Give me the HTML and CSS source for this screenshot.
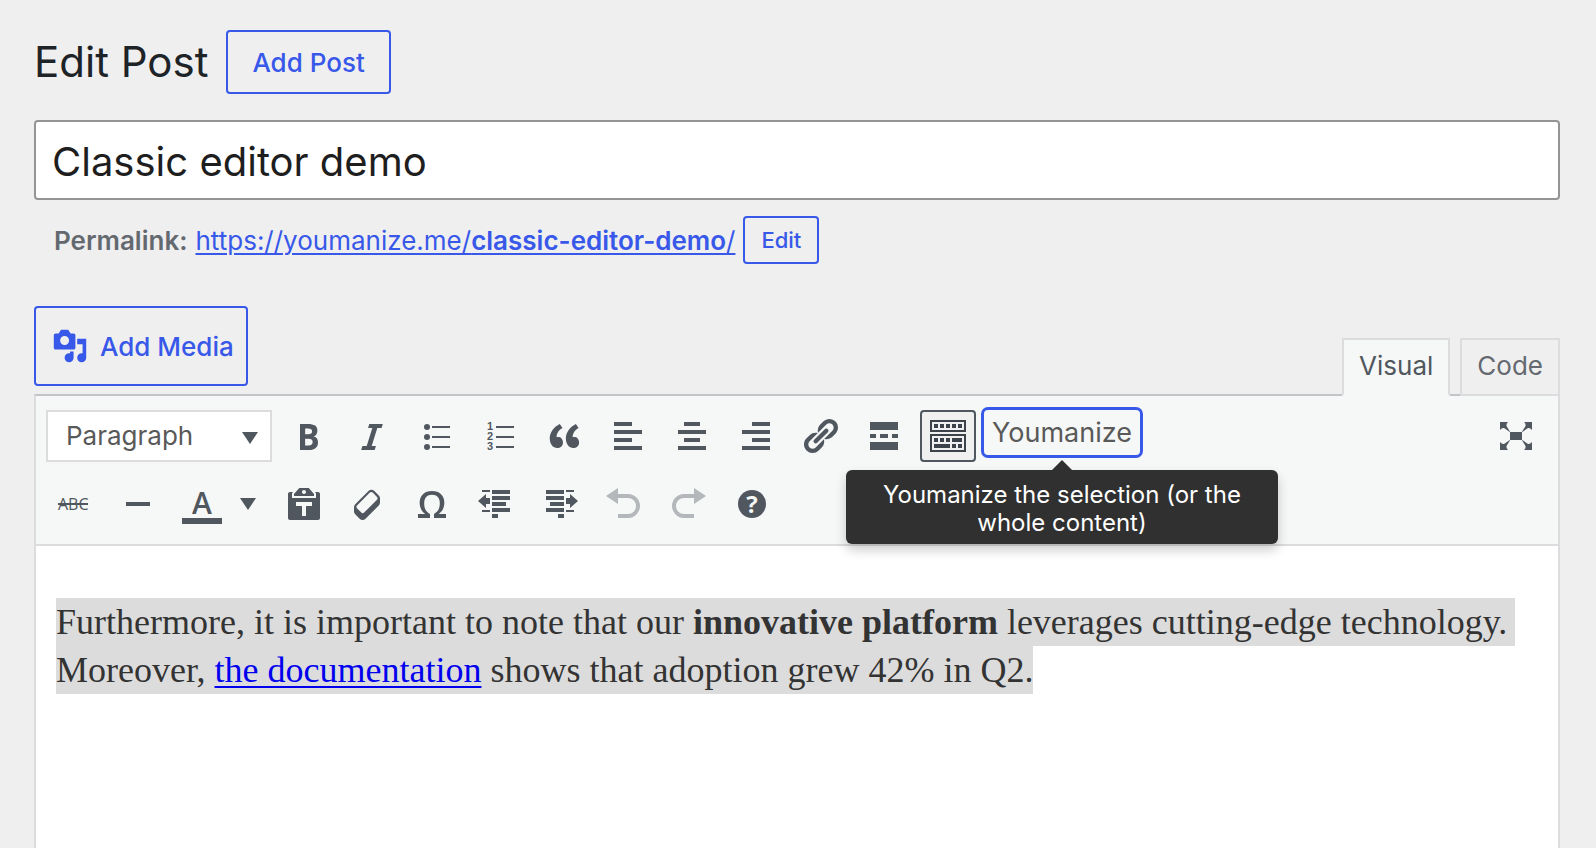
FILE: index.html
```html
<!DOCTYPE html>
<html lang="en">
<head>
<meta charset="utf-8">
<title>Edit Post</title>
<link rel="stylesheet" href="styles.css">
</head>
<body>
<main class="wrap">
  <header class="page-head">
    <h1 class="page-title">Edit Post</h1>
    <button class="btn btn-add" type="button">Add Post</button>
  </header>

  <input class="title-input" type="text" aria-label="Post title" value="Classic editor demo">

  <div class="permalink">
    <strong class="permalink-label">Permalink:</strong>
    <a class="permalink-link" href="#">https://youmanize.me/<b>classic-editor-demo</b>/</a>
    <button class="btn btn-small" type="button">Edit</button>
  </div>

  <div class="editor-tools">
    <button class="btn btn-media" type="button">
      <svg class="media-icon" viewBox="0 0 20 20" aria-hidden="true"><path d="M13 11V4c0-.55-.45-1-1-1h-1.67L9 1H5L3.67 3H2c-.55 0-1 .45-1 1v7c0 .55.45 1 1 1h10c.55 0 1-.45 1-1zM7 4.5c1.38 0 2.5 1.12 2.5 2.5S8.38 9.500 7 9.500 4.500 8.380 4.500 7 5.620 4.500 7 4.500zM14 6h5v10.500c0 1.380-1.120 2.500-2.500 2.500S14 17.880 14 16.500s1.120-2.500 2.500-2.500c.17 0 .34.02.5.05V9h-3V6zm-4 8.050V13h2v3.500c0 1.380-1.120 2.500-2.500 2.500S7 17.880 7 16.500 8.120 14 9.500 14c.17 0 .34.02.5.05z"/></svg>
      Add Media
    </button>
    <div class="tabs">
      <button class="tab tab-active" type="button">Visual</button>
      <button class="tab" type="button">Code</button>
    </div>
  </div>

  <section class="editor">
    <div class="toolbar">
      <div class="tool-row">
        <div class="format">
          <select class="format-select" aria-label="Block format"><option>Paragraph</option></select>
          <svg class="caret format-caret" viewBox="0 0 16 12" aria-hidden="true"><path d="M0 0h16L8 12z"/></svg>
        </div>
        <button class="tool" type="button" aria-label="Bold"><svg class="icon" viewBox="0 0 20 20"><path d="M6 4v13h4.54c1.370 0 2.460-.33 3.260-1 .8-.66 1.200-1.580 1.200-2.770 0-.84-.17-1.510-.51-2.010s-.9-.85-1.670-1.030v-.09c.57-.1 1.020-.4 1.360-.9s.51-1.130.51-1.910c0-1.140-.39-1.980-1.170-2.500C12.750 4.260 11.500 4 9.780 4H6zm2.570 5.150V6.260h1.360c.73 0 1.270.11 1.610.32.34.22.51.58.51 1.070 0 .54-.16.92-.47 1.150s-.82.35-1.510.35h-1.500zm0 2.190h1.600c1.440 0 2.160.53 2.160 1.610 0 .6-.17 1.050-.51 1.340s-.86.43-1.570.43H8.570v-3.380z"/></svg></button>
        <button class="tool" type="button" aria-label="Italic"><svg class="icon" viewBox="0 0 20 20"><path d="M14.780 6h-2.130l-2.800 9h2.120l-.62 2H4.600l.62-2h2.140l2.800-9H8.030l.62-2h6.750z"/></svg></button>
        <button class="tool" type="button" aria-label="Bulleted list"><svg class="icon" viewBox="0 0 40 40"><circle cx="11" cy="11" r="3"/><circle cx="11" cy="21" r="3"/><circle cx="11" cy="31" r="3"/><path d="M16 10h18v2H16zM16 20h18v2H16zM16 30h18v2H16z"/></svg></button>
        <button class="tool" type="button" aria-label="Numbered list"><svg class="icon" viewBox="0 0 40 40"><g class="icon-digits"><text x="7" y="14">1</text><text x="7" y="24">2</text><text x="7" y="34">3</text></g><path d="M16 10h18v2H16zM16 20h18v2H16zM16 30h18v2H16z"/></svg></button>
        <button class="tool" type="button" aria-label="Blockquote"><svg class="icon" viewBox="0 0 20 20"><path d="M9.490 13.220c0-.74-.2-1.380-.61-1.900-.62-.78-1.830-.88-2.530-.72-.29-1.650 1.110-3.750 2.920-4.650L7.880 4c-2.730 1.300-5.420 4.280-4.960 8.050C3.210 14.430 4.590 16 6.540 16c.85 0 1.560-.25 2.120-.75s.83-1.180.83-2.030zm8.050 0c0-.74-.2-1.380-.61-1.900-.63-.78-1.830-.88-2.530-.72-.29-1.650 1.110-3.750 2.920-4.650L15.930 4c-2.730 1.300-5.410 4.280-4.950 8.050.29 2.380 1.660 3.950 3.610 3.950.85 0 1.560-.25 2.120-.75s.83-1.180.83-2.030z"/></svg></button>
        <button class="tool" type="button" aria-label="Align left"><svg class="icon" viewBox="0 0 40 40"><path d="M6 6h18v4H6zM6 14h28v4H6zM6 22h18v4H6zM6 30h28v4H6z"/></svg></button>
        <button class="tool" type="button" aria-label="Align center"><svg class="icon" viewBox="0 0 40 40"><path d="M12 6h16v4H12zM6 14h28v4H6zM12 22h16v4H12zM6 30h28v4H6z"/></svg></button>
        <button class="tool" type="button" aria-label="Align right"><svg class="icon" viewBox="0 0 40 40"><path d="M16 6h18v4H16zM6 14h28v4H6zM16 22h18v4H16zM6 30h28v4H6z"/></svg></button>
        <button class="tool" type="button" aria-label="Insert link"><svg class="icon" viewBox="0 0 20 20"><path d="M17.740 2.760c1.680 1.690 1.680 4.410 0 6.100l-1.530 1.520c-1.120 1.120-2.700 1.470-4.140 1.090l2.620-2.610.76-.77.76-.76c.84-.84.84-2.200 0-3.040-.84-.85-2.200-.85-3.040 0l-.77.76-3.380 3.380c-.37-1.440-.02-3.020 1.100-4.140l1.520-1.530c1.690-1.680 4.420-1.680 6.100 0zM8.590 13.430l5.340-5.340c.42-.42.42-1.100 0-1.520-.44-.43-1.130-.39-1.530 0l-5.330 5.340c-.42.42-.42 1.100 0 1.520.44.43 1.130.39 1.520 0zm-.76 2.290l4.140-4.150c.38 1.440.03 3.020-1.090 4.140l-1.520 1.530c-1.690 1.680-4.410 1.680-6.100 0-1.680-1.680-1.680-4.420 0-6.100l1.530-1.520c1.120-1.120 2.700-1.470 4.140-1.100l-4.140 4.150c-.85.84-.85 2.200 0 3.050.84.84 2.200.84 3.040 0z"/></svg></button>
        <button class="tool" type="button" aria-label="Read more"><svg class="icon" viewBox="0 0 40 40"><path d="M6 6h28v8H6zM6 18h6v4H6zM16 18h8v4h-8zM28 18h6v4h-6zM6 26h28v8H6z"/></svg></button>
        <button class="tool tool-on" type="button" aria-label="Toolbar toggle"><svg class="icon" viewBox="0 0 40 40"><path d="M3 5h34v10H3zM3 19h34v16H3z" fill="none" stroke="currentColor" stroke-width="2"/><path d="M6 8h4v4H6zM12 8h4v4h-4zM18 8h4v4h-4zM24 8h4v4h-4zM30 8h4v4h-4zM6 22h4v4H6zM12 22h4v4h-4zM18 22h4v4h-4zM24 22h10v4H24zM6 28h16v4H6zM24 28h4v4h-4zM30 28h4v4h-4z"/></svg></button>
        <div class="hinted">
          <button class="text-tool" type="button" aria-describedby="hint">Youmanize</button>
          <div class="tooltip" id="hint" role="tooltip">Youmanize the selection (or the whole content)</div>
        </div>
        <button class="tool tool-end" type="button" aria-label="Distraction-free writing"><svg class="icon" viewBox="0 0 40 40"><path d="M14 16h12v8H14z"/><path id="arm" d="M4 6h8q-2 1.500-1.500 4l4 6.500-6.500-4.500q-2-.5-4 2z"/><use href="#arm" transform="matrix(-1 0 0 1 40 0)"/><use href="#arm" transform="matrix(1 0 0 -1 0 40)"/><use href="#arm" transform="matrix(-1 0 0 -1 40 40)"/></svg></button>
      </div>
      <div class="tool-row">
        <button class="tool" type="button" aria-label="Strikethrough"><svg class="icon" viewBox="0 0 40 40"><text class="icon-abc" x="4" y="26">ABC</text><path d="M4 19h30v2H4z"/></svg></button>
        <button class="tool" type="button" aria-label="Horizontal line"><svg class="icon" viewBox="0 0 40 40"><path d="M8 18h24v4H8z"/></svg></button>
        <div class="split">
          <button class="tool" type="button" aria-label="Text color"><svg class="icon" viewBox="0 0 40 40"><text class="icon-letter" x="20" y="30">A</text><path d="M0 34h40v6H0z"/></svg></button>
          <button class="split-open" type="button" aria-label="Choose text color"><svg class="caret" viewBox="0 0 16 12"><path d="M0 0h16L8 12z"/></svg></button>
        </div>
        <button class="tool" type="button" aria-label="Paste as text"><svg class="icon" viewBox="0 0 20 20"><path d="M12.380 2L15 5v1H5V5l2.640-3h4.740zM10 5c.55 0 1-.44 1-1 0-.55-.45-1-1-1s-1 .45-1 1c0 .56.45 1 1 1zm5.450-1H17c.55 0 1 .45 1 1v12c0 .56-.45 1-1 1H3c-.55 0-1-.44-1-1V5c0-.55.45-1 1-1h1.550L4 4.630V7h12V4.630zM14 11V9H6v2h3v5h2v-5h3z"/></svg></button>
        <button class="tool" type="button" aria-label="Clear formatting"><svg class="icon" viewBox="0 0 20 20"><path d="M14.290 4.590l1.100 1.110c.41.4.61.94.61 1.470v2.120c0 .53-.2 1.070-.61 1.470l-6.630 6.630c-.4.41-.94.61-1.470.61s-1.070-.2-1.470-.61l-1.110-1.100-1.100-1.110c-.41-.4-.61-.94-.61-1.470v-2.120c0-.54.2-1.070.61-1.480l6.630-6.620c.4-.41.94-.61 1.470-.61s1.060.2 1.470.61zm-6.210 9.700l6.420-6.420c.39-.39.39-1.030 0-1.430L12.360 4.300c-.19-.19-.45-.29-.72-.29s-.52.1-.71.29l-6.420 6.420c-.39.4-.39 1.040 0 1.430l2.140 2.140c.38.38 1.040.38 1.430 0z"/></svg></button>
        <button class="tool" type="button" aria-label="Special character"><svg class="icon" viewBox="0 0 20 20"><path d="M10 5.400c1.270 0 2.240.36 2.910 1.080.66.71 1 1.760 1 3.130 0 1.280-.23 2.370-.69 3.270-.47.89-1.270 1.520-2.220 2.120v2h6v-2h-3.690c.92-.64 1.620-1.340 2.120-2.340.49-1.010.74-2.130.74-3.350 0-1.780-.55-3.190-1.650-4.220S11.920 3.540 10 3.540s-3.430.53-4.520 1.570c-1.100 1.040-1.650 2.440-1.650 4.200 0 1.210.24 2.310.73 3.330.48 1.010 1.190 1.710 2.100 2.360H3v2h6v-2c-.98-.64-1.800-1.280-2.240-2.170-.45-.89-.67-1.960-.67-3.220 0-1.370.33-2.410 1-3.130C7.750 5.760 8.720 5.400 10 5.400z"/></svg></button>
        <button class="tool" type="button" aria-label="Decrease indent"><svg class="icon" viewBox="0 0 40 40"><path d="M16 6h18v4H16zM16 12h18v4H16zM16 18h14v4H16zM16 24h18v4H16zM16 30h6v4h-6zM6 6h8v2H6zM6 26h8v2H6zM2 17l8-7v4h4v6h-4v4z"/></svg></button>
        <button class="tool" type="button" aria-label="Increase indent"><svg class="icon" viewBox="0 0 40 40"><path d="M6 6h18v4H6zM6 12h18v4H6zM10 18h14v4H10zM6 24h18v4H6zM18 30h6v4h-6zM26 6h8v2h-8zM26 26h8v2h-8zM38 17l-8-7v4h-4v6h4v4z"/></svg></button>
        <button class="tool tool-off" type="button" aria-label="Undo"><svg class="icon" viewBox="0 0 40 40"><path d="M14 4v16L2 12z"/><path d="M14 12h10a10 10 0 0 1 0 20H14" fill="none" stroke="currentColor" stroke-width="4"/></svg></button>
        <button class="tool tool-off" type="button" aria-label="Redo"><svg class="icon" viewBox="0 0 40 40"><path d="M26 4v16l12-8z"/><path d="M26 12H16a10 10 0 0 0 0 20h10" fill="none" stroke="currentColor" stroke-width="4"/></svg></button>
        <button class="tool" type="button" aria-label="Keyboard shortcuts"><svg class="icon" viewBox="0 0 40 40"><circle cx="20" cy="20" r="14"/><text class="icon-help" x="20" y="29">?</text></svg></button>
      </div>
    </div>
    <article class="content">
      <p class="para"><span class="picked picked-run">Furthermore, it is important to note that our <strong>innovative platform</strong> leverages cutting-edge technology.</span> <span class="picked">Moreover, <a class="doc-link" href="#">the documentation</a> shows that adoption grew 42% in Q2.</span></p>
    </article>
  </section>
</main>
</body>
</html>
```
FILE: styles.css
```css
* {
  box-sizing: border-box;
}

body {
  margin: 0;
  background: #efefef;
  color: #1d2327;
  font-family: Inter, "Liberation Sans", sans-serif;
  font-size: 26px;
}

button,
input,
select {
  margin: 0;
  font: inherit;
}

button {
  padding: 0;
  cursor: pointer;
}

.wrap {
  display: flex;
  flex-direction: column;
  min-height: 100vh;
  padding: 30px 36px 0 34px;
}

.page-head {
  display: flex;
  align-items: center;
  gap: 18px;
  margin-bottom: 26px;
}

.page-title {
  margin: 0;
  font-size: 42px;
  font-weight: 400;
  line-height: 64px;
}

.btn {
  border: 2px solid #3858e9;
  border-radius: 4px;
  background: transparent;
  color: #3858e9;
  font-weight: 500;
}

.btn-add {
  height: 64px;
  padding: 0 24px;
}

.title-input {
  width: 100%;
  height: 80px;
  padding: 2px 16px 0;
  border: 2px solid #949494;
  border-radius: 4px;
  background: #fff;
  color: #1e1e1e;
  font-size: 40px;
}

.permalink {
  display: flex;
  align-items: center;
  gap: 8px;
  margin-top: 16px;
  padding-left: 20px;
}

.permalink-label {
  color: #646970;
  font-weight: 600;
}

.permalink-link {
  color: #3858e9;
  text-decoration-thickness: 2px;
  text-underline-offset: 3px;
}

.permalink-link b {
  font-weight: 600;
}

.btn-small {
  height: 48px;
  padding: 0 16px;
  font-size: 22px;
}

.editor-tools {
  display: flex;
  justify-content: space-between;
  align-items: flex-end;
  margin-top: 42px;
}

.btn-media {
  display: flex;
  align-items: center;
  gap: 12px;
  height: 80px;
  margin-bottom: 8px;
  padding: 0 12px 0 16px;
}

.media-icon {
  width: 36px;
  height: 36px;
  fill: currentColor;
}

.tabs {
  display: flex;
  gap: 10px;
  margin-bottom: -2px;
}

.tab {
  position: relative;
  height: 58px;
  padding: 0 15px 4px;
  border: 2px solid #dcdcde;
  background: #efefef;
  color: #646970;
}

.tab-active {
  border-bottom-color: #f6f7f7;
  background: #f6f7f7;
  color: #50575e;
}

.editor {
  display: flex;
  flex: 1;
  flex-direction: column;
  border: 2px solid #dcdcde;
  border-top-color: #c3c4c7;
  border-bottom: 0;
  background: #fff;
}

.toolbar {
  display: flex;
  flex-direction: column;
  gap: 16px;
  padding: 14px 10px;
  border-bottom: 2px solid #dcdcde;
  background: #f6f7f7;
}

.tool-row {
  display: flex;
  gap: 8px;
}

.format {
  position: relative;
  width: 226px;
}

.format-select {
  width: 100%;
  height: 52px;
  padding: 0 18px 2px;
  border: 2px solid #dcdcde;
  border-radius: 0;
  background: #fff;
  color: #595959;
  appearance: none;
}

.caret {
  width: 16px;
  height: 12px;
  fill: #50575e;
}

.format-caret {
  position: absolute;
  top: 22px;
  right: 14px;
  pointer-events: none;
}

.tool {
  display: flex;
  flex: none;
  align-items: center;
  justify-content: center;
  width: 56px;
  height: 52px;
  border: 2px solid transparent;
  border-radius: 4px;
  background: transparent;
  color: #50575e;
}

.tool-on {
  border-color: #50575e;
  background: #f0f0f1;
  color: #3c434a;
}

.tool-off {
  color: #b4b8bb;
}

.tool-end {
  margin-right: 4px;
  margin-left: auto;
}

.icon {
  width: 40px;
  height: 40px;
  overflow: visible;
  fill: currentColor;
}

.icon text {
  font-family: "Open Sans", sans-serif;
}

.icon .icon-digits text {
  font-family: "Liberation Sans", sans-serif;
}

.icon-digits {
  font-size: 11px;
  font-weight: 700;
}

.icon-abc {
  font-size: 16px;
  font-weight: 500;
}

.icon-letter {
  font-size: 30px;
  font-weight: 600;
  text-anchor: middle;
}

.icon-help {
  fill: #f6f7f7;
  font-size: 24px;
  font-weight: 700;
  text-anchor: middle;
}

.hinted {
  position: relative;
}

.text-tool {
  height: 45px;
  padding: 0 8px;
  border: 0;
  border-radius: 4px;
  outline: 3px solid #3858e9;
  background: #f6f7f7;
  color: #595959;
  font-size: 27px;
}

.tooltip {
  position: absolute;
  z-index: 1;
  top: 60px;
  left: 50%;
  width: 432px;
  padding: 11px 32px 7px;
  border-radius: 6px;
  background: #303030;
  box-shadow: 0 6px 12px rgb(0 0 0 / 20%);
  color: #fff;
  font-size: 24px;
  line-height: 28px;
  text-align: center;
  transform: translateX(-50%);
}

.tooltip::before {
  position: absolute;
  bottom: 100%;
  left: 50%;
  margin-left: -10px;
  border: 10px solid transparent;
  border-top: 0;
  border-bottom-color: #303030;
  content: "";
}

.split {
  display: flex;
  width: 94px;
}

.split-open {
  display: flex;
  align-items: center;
  justify-content: center;
  width: 36px;
  border: 0;
  background: transparent;
}

.content {
  padding: 52px 20px;
}

.para {
  margin: 0;
  color: #333;
  font-family: Georgia, "Liberation Serif", serif;
  font-size: 36px;
  line-height: 48px;
}

.picked {
  padding-block: 4px;
  background: #dcdcdc;
}

.picked-run {
  padding-right: 8px;
}

.doc-link {
  color: #00e;
  text-decoration-thickness: 2px;
  text-underline-offset: 4px;
}
```
